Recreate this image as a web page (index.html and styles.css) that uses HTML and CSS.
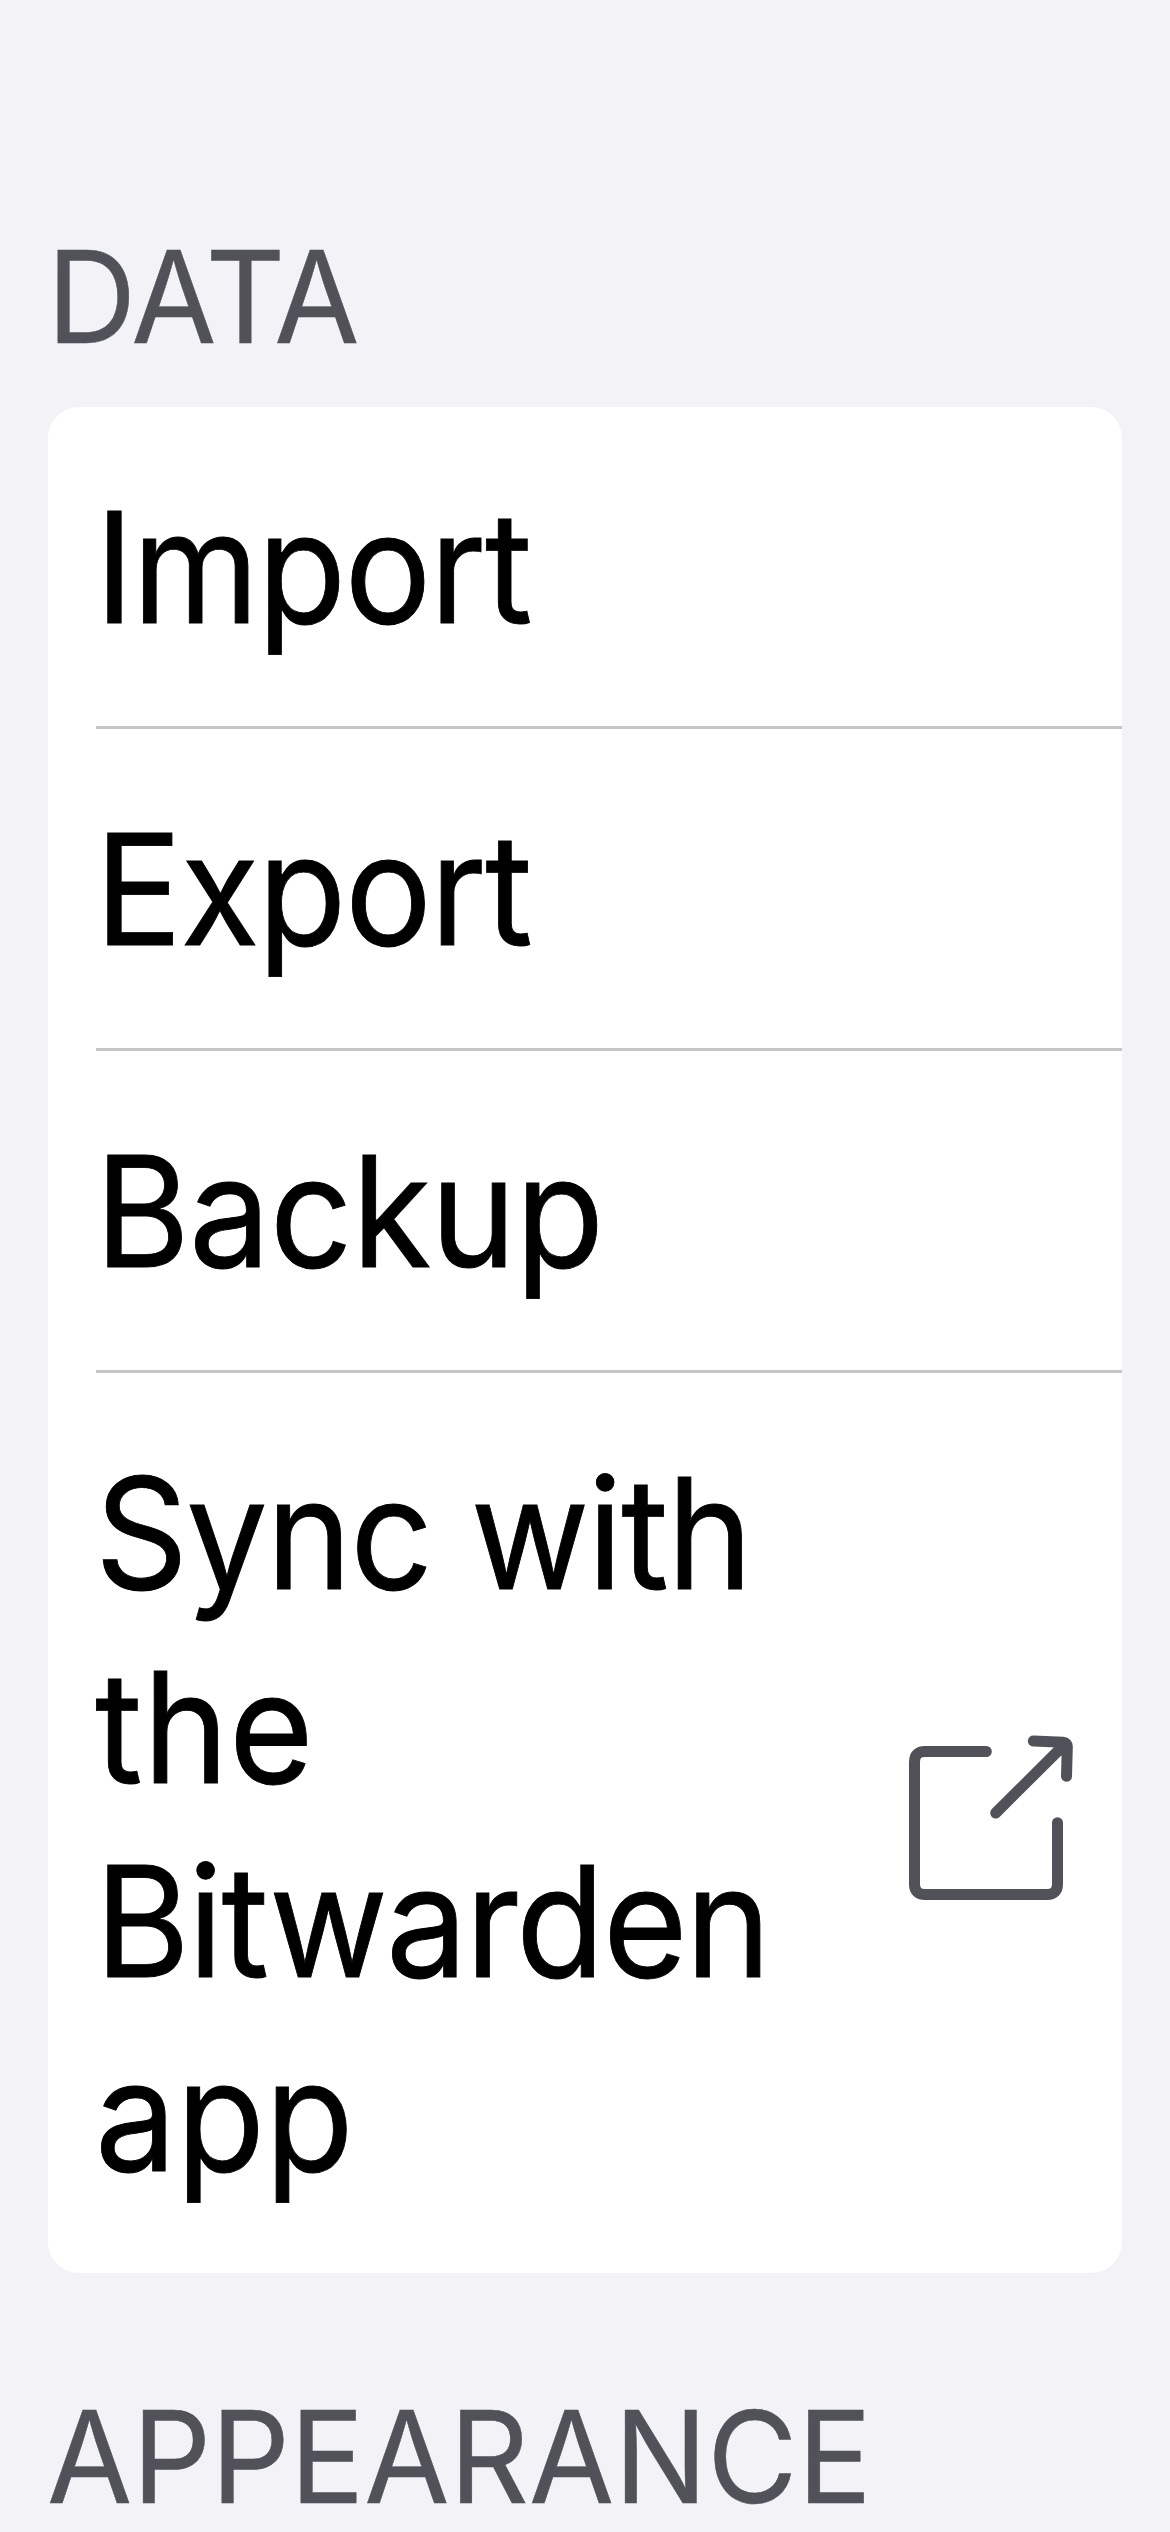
FILE: index.html
```
<!DOCTYPE html>
<html lang="en">
<head>
<meta charset="utf-8">
<title>Settings</title>
<link rel="stylesheet" href="styles.css">
</head>
<body>
<main class="settings">
  <h2 class="heading data"><span>DATA</span></h2>
  <section class="card">
    <div class="row"><span class="text import">Import</span></div>
    <div class="row"><span class="text export">Export</span></div>
    <div class="row"><span class="text backup">Backup</span></div>
    <div class="row sync">
      <div class="label"><span class="text">Sync with</span><span class="text the">the</span><span class="text bitwarden">Bitwarden</span><span class="text app">app</span></div>
      <svg class="icon" viewBox="0 0 168 180" fill="none" stroke="#515159" stroke-width="11" stroke-linecap="round" stroke-linejoin="round">
        <path d="M80.3 18.5H19Q8.5 18.5 8.5 29V151Q8.5 161.5 19 161.5H141Q151.5 161.5 151.5 151V89.7"/>
        <path d="M89.7 80 159 11M127.3 8 157 9.2Q161.5 9.5 161.3 14L160.5 43.3"/>
      </svg>
    </div>
  </section>
  <h2 class="heading appearance"><span>APPEARANCE</span></h2>
</main>
</body>
</html>
```
FILE: styles.css
```
body { margin: 0; background: #f3f2f7; font-family: Inter, "Liberation Sans", sans-serif; color: #000; }
.settings { height: 2532px; overflow: hidden; padding: 0 48px; box-sizing: border-box; }
.heading { margin: 0 0 0 -1px; color: #515159; font-size: 128px; font-weight: 400; line-height: 160px; letter-spacing: -.6px; white-space: nowrap; -webkit-text-stroke: .5px #515159; }
.heading span { display: inline-block; transform: scaleX(.965); transform-origin: left; }
.data { height: 160px; padding: 217px 0 30px; }
.card { height: 1866px; border-radius: 31px; background: #fff; overflow: hidden; }
.row { height: 322px; margin-left: 48px; box-sizing: border-box; border-bottom: 3px solid #c5c5c7; padding-top: 63px; font-size: 154px; font-weight: 400; line-height: 194px; letter-spacing: -1.6px; -webkit-text-stroke: .9px #000; }
.text { display: block; width: max-content; margin-left: -1px; transform: scaleX(.94); transform-origin: left; }
.import, .export { letter-spacing: -1.7px; }
.backup { letter-spacing: -.7px; }
.the { letter-spacing: .6px; }
.bitwarden { letter-spacing: -1.8px; }
.app { letter-spacing: 0; }
.sync { display: flex; justify-content: space-between; align-items: center; height: 900px; padding: 0 48px 0 0; border: 0; white-space: nowrap; }
.label { padding-top: 1px; }
.icon { flex: none; width: 168px; height: 180px; }
.appearance { height: 148px; padding-top: 110px; line-height: 148px; letter-spacing: 0; }
```
